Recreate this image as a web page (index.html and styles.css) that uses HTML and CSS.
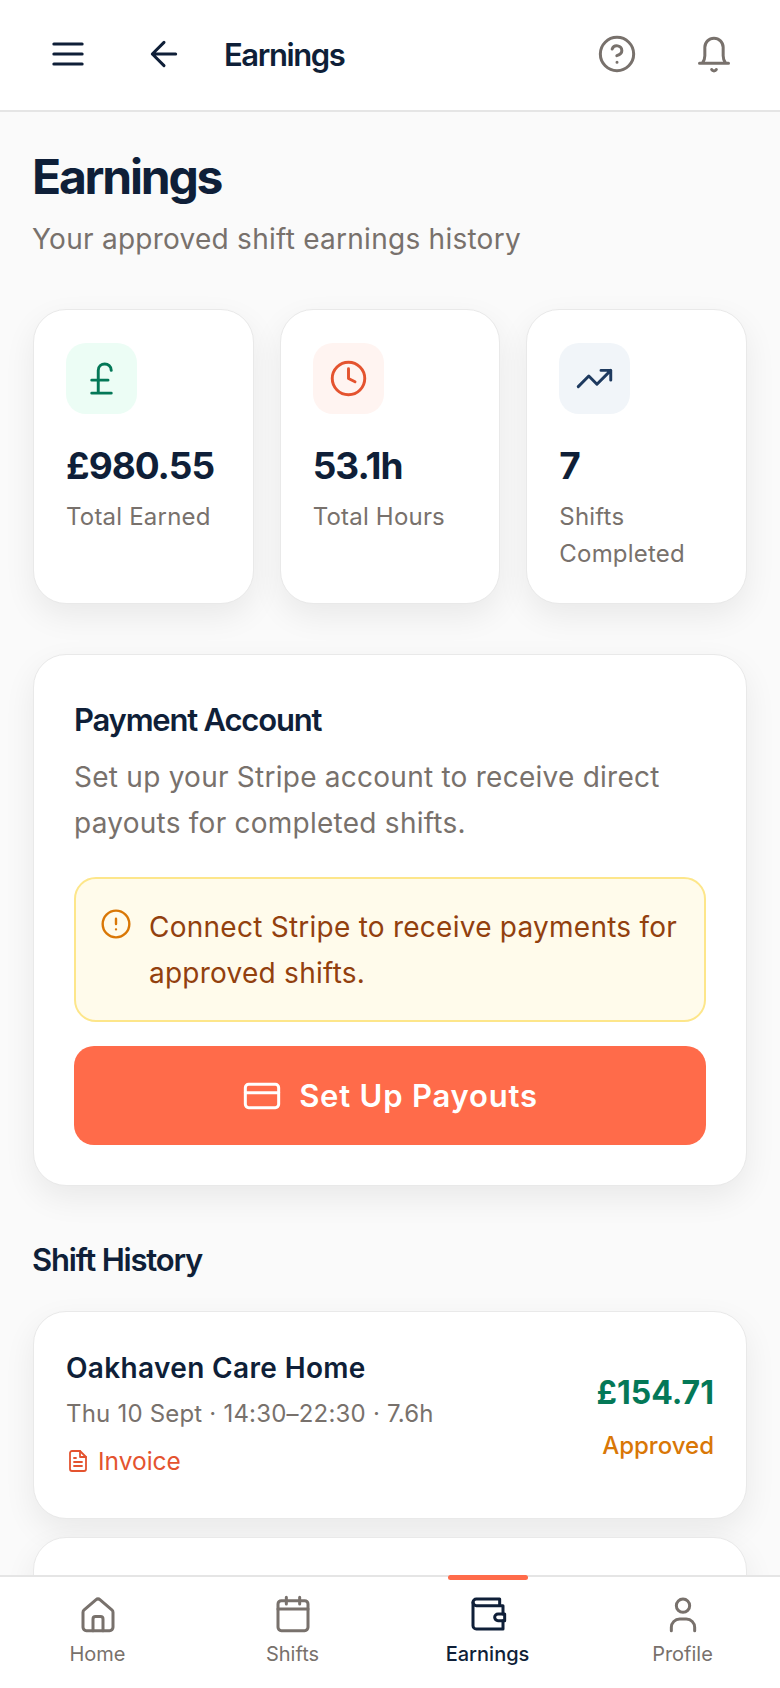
FILE: index.html
```html
<!DOCTYPE html>
<html lang="en">
<head>
  <meta charset="UTF-8" />
  <meta name="viewport" content="width=device-width, initial-scale=1.0"/>
  <title>Earnings</title>
  <link rel="stylesheet" href="styles.css">
</head>
<body>
  <div class="app">
    <header class="topbar">
      <div class="topbar-left">
        <svg class="icon icon-40 navy thin" viewBox="0 0 24 24"><path d="M3.5 6h17M3.5 12h17M3.5 18h17"/></svg>
        <svg class="icon icon-40 navy thin" viewBox="0 0 24 24"><path d="M19 12H5M12 19l-7-7 7-7"/></svg>
        <span class="topbar-title">Earnings</span>
      </div>
      <div class="topbar-right">
        <svg class="icon icon-40 grey thin" viewBox="0 0 24 24"><circle cx="12" cy="12" r="10"/><path d="M9.1 9a3 3 0 0 1 5.8 1c0 2-3 3-3 3M12 17h.01"/></svg>
        <svg class="icon icon-40 grey thin" viewBox="0 0 24 24"><path d="M3.3 17.5h17.4M5 17.5c1-1.2 1.5-2.5 1.5-4.5V8a5.5 5.5 0 0 1 11 0v5c0 2 .5 3.3 1.5 4.5M10.6 21.3a1.6 1.6 0 0 0 2.8 0"/></svg>
      </div>
    </header>

    <main class="content">
      <h1>Earnings</h1>
      <p class="subtitle">Your approved shift earnings history</p>

      <section class="stats">
        <div class="card stat">
          <div class="stat-icon green-bg">
            <svg class="icon icon-39 green thin" viewBox="0 0 24 24"><path d="M18 7c0-5.3-8-5.3-8 0v14M6 21h12M6 13h10"/></svg>
          </div>
          <div class="stat-value">£980.55</div>
          <div class="stat-label">Total Earned</div>
        </div>
        <div class="card stat">
          <div class="stat-icon coral-bg">
            <svg class="icon icon-39 coral thin" viewBox="0 0 24 24"><circle cx="12" cy="12" r="10"/><path d="M12 6v6l4 2"/></svg>
          </div>
          <div class="stat-value">53.1h</div>
          <div class="stat-label">Total Hours</div>
        </div>
        <div class="card stat">
          <div class="stat-icon slate-bg">
            <svg class="icon icon-39 slate thin" viewBox="0 0 24 24"><path d="M22 7l-8.5 8.5-5-5L2 17M16 7h6v6"/></svg>
          </div>
          <div class="stat-value">7</div>
          <div class="stat-label">Shifts Completed</div>
        </div>
      </section>

      <section class="card payment">
        <h2>Payment Account</h2>
        <p class="payment-text">Set up your Stripe account to receive direct payouts for completed shifts.</p>
        <div class="alert">
          <svg class="icon icon-32 amber thin" viewBox="0 0 24 24"><circle cx="12" cy="12" r="10"/><path d="M12 8v4M12 16h.01"/></svg>
          <span>Connect Stripe to receive payments for approved shifts.</span>
        </div>
        <button class="btn-payout" type="button">
          <svg class="icon icon-40 white thin" viewBox="0 0 24 24"><rect x="2" y="5" width="20" height="14" rx="2"/><path d="M2 10h20"/></svg>
          Set Up Payouts
        </button>
      </section>

      <h2 class="section-title">Shift History</h2>

      <section class="card shift">
        <div class="shift-info">
          <div class="shift-name">Oakhaven Care Home</div>
          <div class="shift-meta">Thu 10 Sept · 14:30–22:30 · 7.6h</div>
          <div class="shift-invoice">
            <svg class="icon icon-24 coral thin" viewBox="0 0 24 24"><path d="M14 2H6a2 2 0 0 0-2 2v16a2 2 0 0 0 2 2h12a2 2 0 0 0 2-2V8z"/><path d="M14 2v6h6M16 13H8M16 17H8M10 9H8"/></svg>
            Invoice
          </div>
        </div>
        <div class="shift-side">
          <div class="shift-amount">£154.71</div>
          <div class="shift-status">Approved</div>
        </div>
      </section>

      <section class="card shift"></section>
    </main>

    <nav class="tabbar">
      <div class="tab">
        <svg class="icon icon-40 grey thin" viewBox="0 0 24 24"><path d="M3 11a2 2 0 0 1 .7-1.5l7-6a2 2 0 0 1 2.6 0l7 6A2 2 0 0 1 21 11v9a2 2 0 0 1-2 2H5a2 2 0 0 1-2-2z"/><path d="M9 22v-7a1.5 1.5 0 0 1 1.5-1.5h3A1.5 1.5 0 0 1 15 15v7"/></svg>
        <span>Home</span>
      </div>
      <div class="tab">
        <svg class="icon icon-40 grey thin" viewBox="0 0 24 24"><rect x="3" y="4" width="18" height="18" rx="2"/><path d="M8 2v4M16 2v4M3 9h18"/></svg>
        <span>Shifts</span>
      </div>
      <div class="tab tab-active">
        <svg class="icon icon-40 navy thin" viewBox="0 0 24 24"><path d="M21 12V7H5a2 2 0 0 1 0-4h14v4"/><path d="M3 5v14a2 2 0 0 0 2 2h16v-5"/><path d="M18 12a2 2 0 0 0 0 4h4v-4z"/></svg>
        <span>Earnings</span>
      </div>
      <div class="tab">
        <svg class="icon icon-40 grey thin" viewBox="0 0 24 24"><circle cx="12" cy="7" r="4"/><path d="M5 22v-2a5 5 0 0 1 5-5h4a5 5 0 0 1 5 5v2"/></svg>
        <span>Profile</span>
      </div>
    </nav>
  </div>
</body>
</html>
```

FILE: styles.css
```css
:root {
  --navy: #0f1f38;
  --grey: #78716c;
  --coral: #ff6b4a;
  --coral-dark: #e4532f;
  --green: #047857;
  --amber: #d97706;
  --border: #e9e9e9;
}
* {
  box-sizing: border-box;
}
body {
  margin: 0;
  background: #fafafa;
  font-family: 'Inter', 'Liberation Sans', sans-serif;
  color: var(--navy);
}
h1, h2, p {
  margin: 0;
}
.app {
  width: 780px;
  height: 1688px;
  display: flex;
  flex-direction: column;
  overflow: hidden;
}

.icon {
  display: block;
  flex: none;
  fill: none;
  stroke: currentColor;
  stroke-width: 2;
  stroke-linecap: round;
  stroke-linejoin: round;
}
.icon.thin { stroke-width: 1.8; }
.icon-24 { width: 24px; height: 24px; }
.icon-32 { width: 32px; height: 32px; }
.icon-39 { width: 39px; height: 39px; }
.icon-40 { width: 40px; height: 40px; }
.navy { color: var(--navy); }
.grey { color: var(--grey); }
.green { color: var(--green); }
.coral { color: var(--coral-dark); }
.slate { color: #1e3a5f; }
.amber { color: var(--amber); }
.white { color: #fff; }

.topbar {
  flex: none;
  height: 112px;
  padding: 0 46px 2px 48px;
  display: flex;
  align-items: center;
  justify-content: space-between;
  background: #fff;
  border-bottom: 2px solid #e5e5e5;
}
.topbar-left {
  display: flex;
  align-items: center;
  gap: 56px;
}
.topbar-left .topbar-title {
  margin-left: -16px;
  font-size: 31px;
  font-weight: 600;
  letter-spacing: -1.4px;
}
.topbar-right {
  display: flex;
  align-items: center;
  gap: 57px;
}

.content {
  flex: 1;
  min-height: 0;
  overflow: hidden;
  padding: 36px 33px 0;
}
h1 {
  margin-left: -1px;
  font-size: 48px;
  line-height: 58px;
  font-weight: 700;
  letter-spacing: -2.2px;
}
.subtitle {
  margin: 17px 0 0 -1px;
  font-size: 28px;
  line-height: 32px;
  letter-spacing: 0.26px;
  color: var(--grey);
}

.card {
  background: #fff;
  border: 1px solid var(--border);
  border-radius: 33px;
  box-shadow: 0 12px 32px rgba(0,0,0,0.07);
}
.stats {
  margin-top: 54px;
  display: grid;
  grid-template-columns: repeat(3, 1fr);
  gap: 26px;
}
.stat {
  height: 295px;
  padding: 33px 32px;
}
.stat-icon {
  width: 71px;
  height: 71px;
  border-radius: 20px;
  display: flex;
  align-items: center;
  justify-content: center;
}
.green-bg { background: #ecfdf5; }
.coral-bg { background: #fff4f1; }
.slate-bg { background: #f1f5f9; }
.stat-value {
  margin-top: 30px;
  font-size: 37px;
  line-height: 44px;
  font-weight: 700;
  letter-spacing: -1px;
}
.stat-label {
  margin-top: 10px;
  font-size: 24px;
  line-height: 37px;
  letter-spacing: 0.2px;
  color: var(--grey);
}

.payment {
  margin-top: 50px;
  height: 532px;
  padding: 45px 40px 0;
}
.payment h2 {
  font-size: 31px;
  line-height: 40px;
  font-weight: 600;
  letter-spacing: -1.2px;
}
.payment-text {
  margin-top: 14px;
  font-size: 28px;
  line-height: 46px;
  letter-spacing: 0.25px;
  color: var(--grey);
}
.alert {
  margin-top: 31px;
  height: 145px;
  padding: 25px 24px 0;
  display: flex;
  gap: 17px;
  background: #fffbeb;
  border: 2px solid #fde68a;
  border-radius: 22px;
  font-size: 28px;
  line-height: 46px;
  letter-spacing: 0.25px;
  color: #92400e;
}
.alert .icon {
  margin-top: 4px;
}
.btn-payout {
  margin-top: 24px;
  width: 100%;
  height: 99px;
  display: flex;
  align-items: center;
  justify-content: center;
  gap: 17px;
  border: none;
  border-radius: 20px;
  background: var(--coral);
  color: #fff;
  font-family: inherit;
  font-size: 31px;
  font-weight: 600;
  letter-spacing: 0.8px;
}

.section-title {
  margin: 54px 0 0 -1px;
  font-size: 31px;
  line-height: 40px;
  font-weight: 600;
  letter-spacing: -1.2px;
}

.shift {
  margin-top: 31px;
  height: 208px;
  padding: 0 32px;
  display: flex;
  align-items: center;
  justify-content: space-between;
}
.shift + .shift {
  margin-top: 18px;
}
.shift-info {
  padding-bottom: 4px;
}
.shift-name {
  font-size: 28px;
  line-height: 40px;
  font-weight: 600;
  letter-spacing: 0.35px;
}
.shift-meta {
  margin-top: 8px;
  font-size: 24px;
  line-height: 36px;
  letter-spacing: 0.2px;
  color: var(--grey);
}
.shift-invoice {
  margin-top: 11px;
  display: flex;
  align-items: center;
  gap: 8px;
  font-size: 24.5px;
  line-height: 36px;
  color: var(--coral-dark);
}
.shift-side {
  padding-top: 7px;
  text-align: right;
}
.shift-amount {
  font-size: 32px;
  line-height: 40px;
  font-weight: 700;
  color: var(--green);
}
.shift-status {
  margin-top: 15px;
  font-size: 24px;
  line-height: 36px;
  font-weight: 500;
  color: var(--amber);
}

.tabbar {
  flex: none;
  height: 113px;
  display: grid;
  grid-template-columns: repeat(4, 1fr);
  background: #fff;
  border-top: 2px solid #e5e5e5;
}
.tab {
  position: relative;
  display: flex;
  flex-direction: column;
  align-items: center;
  padding-top: 17px;
  font-size: 20px;
  line-height: 28px;
  color: var(--grey);
}
.tab span {
  margin-top: 6px;
}
.tab-active {
  color: var(--navy);
  font-weight: 500;
}
.tab-active::before {
  content: "";
  position: absolute;
  top: -2px;
  left: 58px;
  width: 80px;
  height: 5px;
  border-radius: 3px;
  background: var(--coral);
}
```
